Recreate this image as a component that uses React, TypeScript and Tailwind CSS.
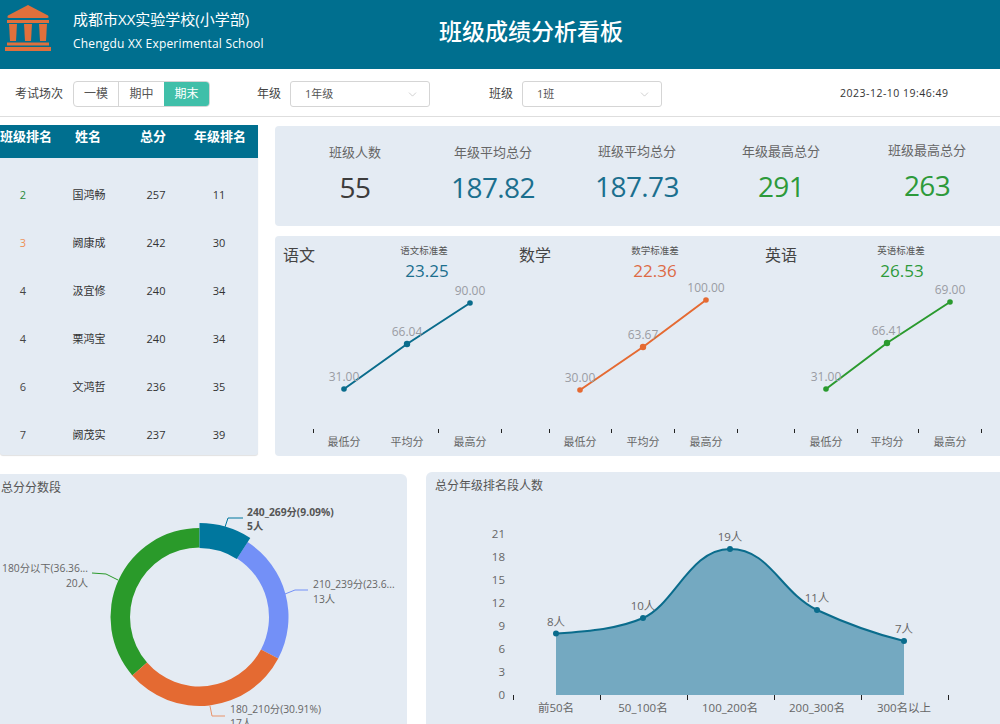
import { ChevronDown } from "lucide-react"

const rows = [
  { rank: 2, name: "国鸿畅", total: 257, grade: 11, color: "text-[#2a8a3a]" },
  { rank: 3, name: "阙康成", total: 242, grade: 30, color: "text-[#ee9055]" },
  { rank: 4, name: "汲宜修", total: 240, grade: 34, color: "text-[#444]" },
  { rank: 4, name: "栗鸿宝", total: 240, grade: 34, color: "text-[#444]" },
  { rank: 6, name: "文鸿哲", total: 236, grade: 35, color: "text-[#444]" },
  { rank: 7, name: "阙茂实", total: 237, grade: 39, color: "text-[#444]" },
]

const stats = [
  { label: "班级人数", value: "55", color: "text-[#3c3c3c]", labelClass: "mt-[15px]" },
  { label: "年级平均总分", value: "187.82", color: "text-[#1b6f8e]", labelClass: "mt-[15px]" },
  { label: "班级平均总分", value: "187.73", color: "text-[#1b6f8e]", labelClass: "mt-[14px]" },
  { label: "年级最高总分", value: "291", color: "text-[#2d9a3a]", labelClass: "mt-[14px]" },
  { label: "班级最高总分", value: "263", color: "text-[#2d9a3a]", labelClass: "mt-[13px]" },
]

const subjects = [
  {
    name: "语文",
    x0: 283,
    width: 236,
    stdWidth: "w-[282px]",
    std: "23.25",
    stdColor: "pl-[6px] text-[#1b6f8e]",
    color: "#0a6c8c",
    points: [
      { x: 344, y: 389, label: "31.00" },
      { x: 407, y: 344, label: "66.04" },
      { x: 470, y: 303, label: "90.00" },
    ],
    ticks: [313, 438, 501],
  },
  {
    name: "数学",
    x0: 519,
    width: 246,
    stdWidth: "w-[272px]",
    std: "22.36",
    stdColor: "text-[#dd6a45]",
    color: "#e56a32",
    points: [
      { x: 580, y: 390, label: "30.00" },
      { x: 643, y: 347, label: "63.67" },
      { x: 706, y: 300, label: "100.00" },
    ],
    ticks: [549, 611, 674, 737],
  },
  {
    name: "英语",
    x0: 765,
    width: 235,
    stdWidth: "w-[272px]",
    std: "26.53",
    stdColor: "pl-[2px] text-[#2d9a3a]",
    color: "#2a9a2e",
    points: [
      { x: 826, y: 389, label: "31.00" },
      { x: 887, y: 343, label: "66.41" },
      { x: 950, y: 302, label: "69.00" },
    ],
    ticks: [794, 857, 918, 981],
  },
]

// clockwise from 12 o'clock, angles in degrees
function arc(cx: number, cy: number, r0: number, r1: number, from: number, to: number) {
  const pt = (r: number, a: number) => {
    const t = (a * Math.PI) / 180
    return `${cx + r * Math.sin(t)} ${cy - r * Math.cos(t)}`
  }
  return `M${pt(r1, from)} A${r1} ${r1} 0 ${to - from > 180 ? 1 : 0} 1 ${pt(r1, to)} L${pt(r0, to)} A${r0} ${r0} 0 ${to - from > 180 ? 1 : 0} 0 ${pt(r0, from)} Z`
}

function Logo() {
  return (
    <svg width="46" height="46" viewBox="0 0 46 46" fill="#e0703c">
      <path d="M23 0 L43 10.5 Q44.5 13 42 13 L4 13 Q1.5 13 3 10.5 Z" />
      <rect x="2" y="15" width="42" height="3" />
      <path d="M4 19 H12 L11 36 H5 Z" />
      <path d="M19 19 H27 L26 36 H20 Z" />
      <path d="M34 19 H42 L41 36 H35 Z" />
      <rect x="2" y="37.5" width="42" height="3" />
      <rect x="0" y="42" width="46" height="4" />
    </svg>
  )
}

function Subject({ s }: { s: (typeof subjects)[number] }) {
  return (
    <div>
      <div className="flex h-[44px]">
        <div className="w-[0px] shrink-0 whitespace-nowrap pt-[6px] text-[16px] leading-[26px] text-[#444]">{s.name}</div>
        <div className={`${s.stdWidth} shrink-0 pt-[7px] text-center`}>
          <div className="text-[9.5px] leading-[16px] text-[#555]">{s.name}标准差</div>
          <div className={`text-[17px] leading-[24px] ${s.stdColor}`}>{s.std}</div>
        </div>
      </div>
      <svg className="block" width={s.width} height="176" viewBox={`${s.x0} 280 ${s.width} 176`}>
        <polyline
          points={s.points.map((p) => `${p.x},${p.y}`).join(" ")}
          fill="none"
          stroke={s.color}
          strokeWidth="2"
        />
        {s.points.map((p, i) => (
          <g key={p.label}>
            <circle cx={p.x} cy={p.y} r={i === 1 ? 3.2 : 2.8} fill={s.color} />
            <text x={p.x} y={p.y - 8} textAnchor="middle" fontSize="12" fill="#9a9ca3">
              {p.label}
            </text>
          </g>
        ))}
        {s.ticks.map((t) => (
          <line key={t} x1={t + 0.5} x2={t + 0.5} y1="429" y2="433" stroke="#222" strokeWidth="1" />
        ))}
        {s.points.map((p, i) => (
          <text key={i} x={p.x} y="446" textAnchor="middle" fontSize="11" fill="#666">
            {["最低分", "平均分", "最高分"][i]}
          </text>
        ))}
      </svg>
    </div>
  )
}

function Donut() {
  return (
    <svg className="block" width="407" height="224" viewBox="0 500 407 224" fontSize="10.3" fill="#666">
      <path d={arc(199.5, 617, 69.5, 89, 229, 360)} fill="#2a9a2a" />
      <path d={arc(199.5, 617, 69.5, 89, 32.7, 117.8)} fill="#7390f7" />
      <path d={arc(199.5, 617, 69.5, 89, 117.8, 229)} fill="#e46a32" />
      <path d={arc(199.5, 617, 69, 94, 0, 32.7)} fill="#00779e" />

      <polyline points="225,527 228,518 243,518" fill="none" stroke="#00779e" />
      <polyline points="285,594 295,590 308,590" fill="none" stroke="#7390f7" />
      <polyline points="210,706 212,716 225,716" fill="none" stroke="#e9936a" />
      <polyline points="118,580 106,574 92,573" fill="none" stroke="#2a9a2a" />

      <text x="247" y="516" fontWeight="700" fill="#555">240_269分(9.09%)</text>
      <text x="247" y="530" fontWeight="700" fill="#555">5人</text>
      <text x="313" y="588">210_239分(23.6...</text>
      <text x="313" y="603">13人</text>
      <text x="230" y="713">180_210分(30.91%)</text>
      <text x="230" y="727">17人</text>
      <text x="88" y="572" textAnchor="end">180分以下(36.36...</text>
      <text x="88" y="587" textAnchor="end">20人</text>
    </svg>
  )
}

function AreaChart() {
  const curve = "M556 633.5 C590 631 618 629 643 618 C675 604 690 549 730 549 C770 549 780 592 817 610 C845 623 875 634 904 641"
  const pts = [
    { x: 556, y: 633.5, v: "8人", l: "前50名" },
    { x: 643, y: 618, v: "10人", l: "50_100名" },
    { x: 730, y: 549, v: "19人", l: "100_200名" },
    { x: 817, y: 610, v: "11人", l: "200_300名" },
    { x: 904, y: 641, v: "7人", l: "300名以上" },
  ]
  return (
    <svg className="block" width="574" height="226" viewBox="426 498 574 226" fontSize="11.5" fill="#666">
      <path d={`${curve} L904 695 L556 695 Z`} fill="#74a9c1" />
      <path d={curve} fill="none" stroke="#0a6c8c" strokeWidth="2" />
      {pts.map((p) => (
        <g key={p.l}>
          <circle cx={p.x} cy={p.y} r="3" fill="#0a6c8c" />
          <text x={p.x} y={p.y - 8} textAnchor="middle">{p.v}</text>
          <text x={p.x} y="712" textAnchor="middle">{p.l}</text>
        </g>
      ))}
      {[0, 3, 6, 9, 12, 15, 18, 21].map((v) => (
        <text key={v} x="505" y={699 - v * 7.67} textAnchor="end">{v}</text>
      ))}
      {[513, 600, 687, 774, 861, 948].map((t) => (
        <line key={t} x1={t + 0.5} x2={t + 0.5} y1="695" y2="700" stroke="#222" />
      ))}
    </svg>
  )
}

function Select({ value }: { value: string }) {
  return (
    <div className="flex h-[26px] w-[140px] items-center justify-between rounded-[3px] border border-[#d5d5d5] pl-[14px] pr-[10px] text-[11px] text-[#555]">
      {value}
      <ChevronDown size={13} strokeWidth={1} className="text-[#aaa]" />
    </div>
  )
}

export default function App() {
  return (
    <div className="h-[724px] w-[1000px] overflow-hidden bg-white font-['Open_Sans','Noto_Sans_CJK_SC',sans-serif]">
      {/* Header */}
      <header className="flex h-[69px] items-center bg-[#006f8f] text-white">
        <div className="ml-[5px] mr-[22px] -mt-[13px]">
          <Logo />
        </div>
        <div className="w-[366px] -mt-[6px]">
          <div className="text-[15px] leading-[24px]">成都市XX实验学校(小学部)</div>
          <div className="text-[12px] leading-[26px] tracking-[0.2px]">Chengdu XX Experimental School</div>
        </div>
        <h1 className="-mt-[7px] text-[23px] font-medium">班级成绩分析看板</h1>
      </header>

      {/* Filters */}
      <div className="flex h-[48px] items-center border-b border-[#dedede] pt-[3px] text-[12px] text-[#444]">
        <span className="ml-[15px] w-[58px]">考试场次</span>
        <div className="flex h-[26px] w-[137px] overflow-hidden rounded-[4px] border border-[#d5d5d5] text-[12px] text-[#555]">
          <div className="flex w-[45px] items-center justify-center border-r border-[#d5d5d5]">一模</div>
          <div className="flex w-[45px] items-center justify-center">期中</div>
          <div className="-my-px flex flex-1 items-center justify-center bg-[#40bfa9] text-white">期末</div>
        </div>
        <span className="ml-[47px] w-[33px]">年级</span>
        <Select value="1年级" />
        <span className="ml-[59px] w-[33px]">班级</span>
        <Select value="1班" />
        <span className="ml-[178px] text-[10.5px] tracking-[0.5px] text-[#333]">2023-12-10 19:46:49</span>
      </div>

      {/* Middle */}
      <div className="flex pt-[8px]">
        <div className="h-[330px] w-[258px] shrink-0 overflow-hidden rounded-b-[3px] bg-[#e4ebf3] shadow-[0_1px_1px_rgba(0,0,0,0.12)]">
          <div className="grid h-[33px] grid-cols-[52px_72px_58px_76px] bg-[#006f8f] text-center text-[13px] leading-[22px] font-bold text-white">
            <span className="whitespace-nowrap">班级排名</span>
            <span>姓名</span>
            <span>总分</span>
            <span>年级排名</span>
          </div>
          <div className="pt-[13px]">
            {rows.map((r, i) => (
              <div key={i} className="grid h-[48px] grid-cols-[46px_86px_48px_78px] items-center text-center text-[11px] text-[#333]">
                <span className={r.color}>{r.rank}</span>
                <span>{r.name}</span>
                <span>{r.total}</span>
                <span>{r.grade}</span>
              </div>
            ))}
          </div>
        </div>

        <div className="ml-[17px] min-w-0 flex-1 pt-[1px]">
          <div className="grid h-[100px] grid-cols-[140px_136px_152px_136px_156px] rounded-l-[4px] bg-[#e4ebf3] pl-[10px] text-center">
            {stats.map((s) => (
              <div key={s.label}>
                <div className={`${s.labelClass} text-[13px] leading-[22px] text-[#666]`}>{s.label}</div>
                <div className={`mt-[4px] text-[28px] leading-[40px] tracking-[-0.6px] ${s.color}`}>{s.value}</div>
              </div>
            ))}
          </div>
          <div className="mt-[10px] grid h-[220px] grid-cols-[236px_246px_235px] rounded-l-[4px] bg-[#e4ebf3] pl-[8px]">
            {subjects.map((s) => (
              <Subject key={s.name} s={s} />
            ))}
          </div>
        </div>
      </div>

      {/* Bottom */}
      <div className="mt-[16px] flex items-start">
        <div className="mt-[2px] h-[260px] w-[407px] shrink-0 rounded-tr-[6px] bg-[#e4ebf3]">
          <div className="h-[26px] pl-[1px] pt-[5px] text-[12px] leading-[18px] text-[#555]">总分分数段</div>
          <Donut />
        </div>
        <div className="ml-[19px] h-[260px] min-w-0 flex-1 rounded-tl-[6px] bg-[#e4ebf3]">
          <div className="h-[26px] pl-[9px] pt-[5px] text-[12px] leading-[18px] text-[#555]">总分年级排名段人数</div>
          <AreaChart />
        </div>
      </div>
    </div>
  )
}
